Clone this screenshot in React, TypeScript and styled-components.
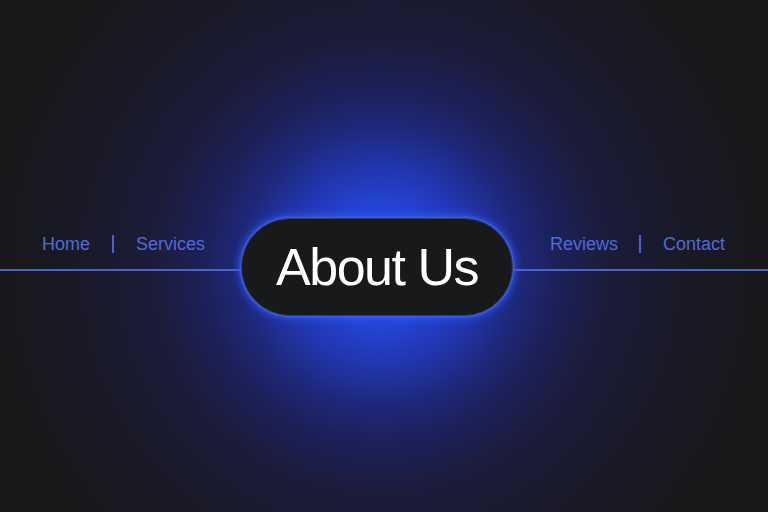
import React from 'react'
import { createGlobalStyle, styled } from 'styled-components'

const GlobalStyle = createGlobalStyle`
  html, body {
    margin: 0;
    padding: 0;
    height: 100%;
    background: #18181b;
  }
  #root {
    height: 100%;
  }
`

type NavItem = { label: string }

const leftLinks: NavItem[] = [{ label: 'Home' }, { label: 'Services' }]
const rightLinks: NavItem[] = [{ label: 'Reviews' }, { label: 'Contact' }]

const NavGroup = ({ items }: { items: NavItem[] }) => (
  <StyledNav>
    {items.map((item, i) => (
      <React.Fragment key={item.label}>
        {i > 0 && <StyledDivider />}
        <StyledLink href="#">{item.label}</StyledLink>
      </React.Fragment>
    ))}
  </StyledNav>
)

const App = () => {
  return (
    <>
      <GlobalStyle />
      <StyledPage>
        <StyledBar>
          <StyledSide $width="241px" $padLeft="42px" $padRight="36px">
            <NavGroup items={leftLinks} />
            <StyledRule />
          </StyledSide>
          <StyledPill>{`About Us`}</StyledPill>
          <StyledSide $padLeft="37px" $padRight="43px">
            <NavGroup items={rightLinks} />
            <StyledRule />
          </StyledSide>
        </StyledBar>
      </StyledPage>
    </>
  )
}

const StyledPage = styled.div`
  width: 768px;
  height: 512px;
  overflow: hidden;
  display: flex;
  flex-direction: column;
  justify-content: flex-start;
  padding-top: 218px;
  box-sizing: border-box;
  background:
    radial-gradient(
      circle 380px at 380px 266px,
      #2648e0 0%,
      #2444d4 16%,
      #2136ae 26%,
      #1e2879 37%,
      #1c2058 47%,
      #1b1c3a 60%,
      #191928 79%,
      #18181b 100%
    ),
    #18181b;
`

const StyledBar = styled.div`
  display: flex;
  flex-direction: row;
  align-items: center;
  width: 100%;
`

const StyledSide = styled.div<{ $width?: string; $padLeft: string; $padRight: string }>`
  position: relative;
  display: flex;
  flex-direction: column;
  ${({ $width }) => ($width ? `width: ${$width}; flex: none;` : 'flex: 1;')}
  padding-bottom: 31px;
  gap: 13px;

  & > nav {
    padding-left: ${({ $padLeft }) => $padLeft};
    padding-right: ${({ $padRight }) => $padRight};
  }
`

const StyledNav = styled.nav`
  display: flex;
  flex-direction: row;
  align-items: center;
  justify-content: space-between;
  height: 24px;
`

const StyledLink = styled.a`
  font-family: "Liberation Sans", Arial, sans-serif;
  font-size: 18px;
  line-height: 24px;
  color: #4f6bd6;
  text-decoration: none;
`

const StyledDivider = styled.span`
  width: 2px;
  height: 18px;
  background: #4a62c4;
`

const StyledRule = styled.div`
  height: 2px;
  background: #4a63c8;
  margin-right: -2px;
  margin-left: -2px;
`

const StyledPill = styled.div`
  flex: none;
  position: relative;
  z-index: 1;
  width: 272px;
  height: 98px;
  box-sizing: border-box;
  border-radius: 49px;
  border: 1.5px solid #363b55;
  background: #18191b;
  box-shadow: 0 0 8px 2px rgba(52, 92, 255, 0.85), 0 0 2px 1px rgba(70, 110, 255, 0.9);
  display: flex;
  align-items: center;
  justify-content: center;
  font-family: "Liberation Sans", Arial, sans-serif;
  font-size: 52px;
  letter-spacing: -1.5px;
  color: #ffffff;
`

export default App
